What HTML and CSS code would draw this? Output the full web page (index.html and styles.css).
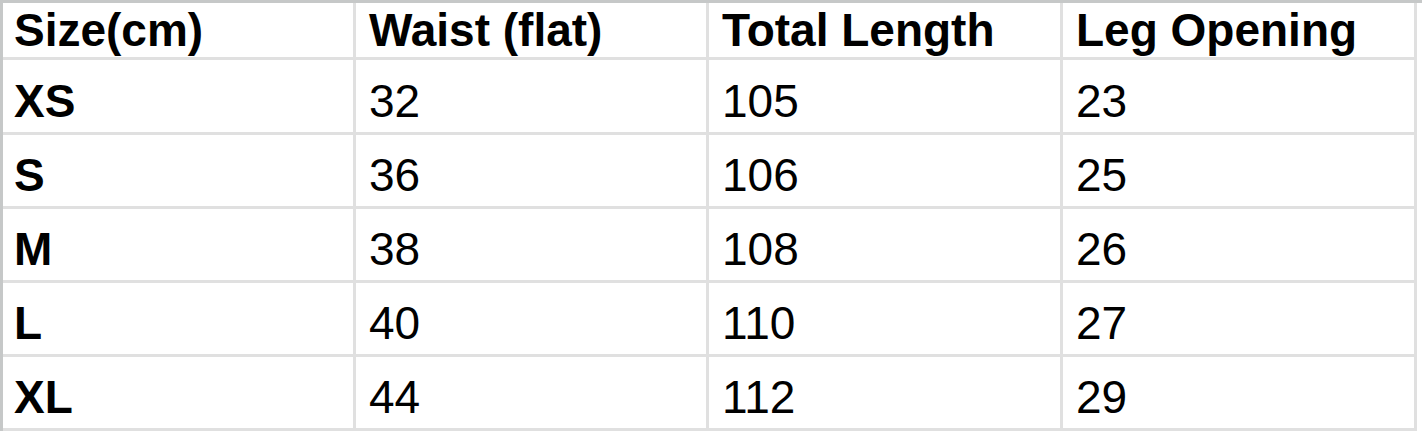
FILE: index.html
```html
<!DOCTYPE html>
<html>
<head>
<meta charset="utf-8">
<link rel="stylesheet" href="styles.css">
</head>
<body>
<div class="wrap">
  <div class="sheet">
    <div class="cell head key">Size(cm)</div>
    <div class="cell head">Waist (flat)</div>
    <div class="cell head">Total Length</div>
    <div class="cell head">Leg Opening</div>

    <div class="cell bold key">XS</div>
    <div class="cell">32</div>
    <div class="cell">105</div>
    <div class="cell">23</div>

    <div class="cell bold key">S</div>
    <div class="cell">36</div>
    <div class="cell">106</div>
    <div class="cell">25</div>

    <div class="cell bold key">M</div>
    <div class="cell">38</div>
    <div class="cell">108</div>
    <div class="cell">26</div>

    <div class="cell bold key">L</div>
    <div class="cell">40</div>
    <div class="cell">110</div>
    <div class="cell">27</div>

    <div class="cell bold key">XL</div>
    <div class="cell">44</div>
    <div class="cell">112</div>
    <div class="cell">29</div>
  </div>
</div>
</body>
</html>
```
FILE: styles.css
```css
html, body {
  margin: 0;
  padding: 0;
  background: #ffffff;
}

.wrap {
  border-top: 3px solid #c6c8c8;
  width: 100%;
}

.sheet {
  display: grid;
  grid-template-columns: 350px 350px 351px 351px;
  grid-template-rows: 54px 72px repeat(4, 71px);
  gap: 3px;
  width: fit-content;
  background: #e0e0e0;
  border-left: 3px solid #c6c8c8;
  padding-right: 3px;
  padding-bottom: 3px;
  font-family: "Liberation Sans", Arial, sans-serif;
  font-size: 46px;
  color: #000000;
}

.cell {
  background: #ffffff;
  display: flex;
  align-items: flex-end;
  padding: 0 12px 4px 13px;
  line-height: 1.15;
  white-space: nowrap;
}

.key {
  padding-left: 11px;
}

.head {
  font-weight: bold;
  padding-bottom: 0;
}

.bold {
  font-weight: bold;
}
```
